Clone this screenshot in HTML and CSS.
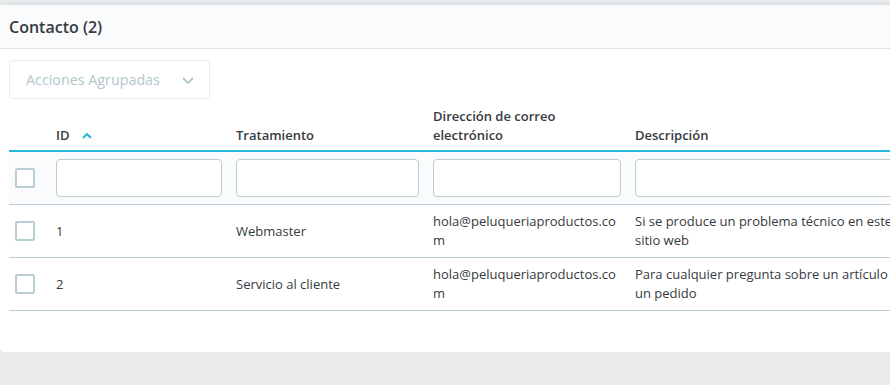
FILE: index.html
```html
<!DOCTYPE html>
<html lang="es">
<head>
<meta charset="utf-8">
<title>Contacto</title>
<link rel="stylesheet" href="styles.css">
</head>
<body>
<div class="page">
  <div class="card">
    <div class="card-header">Contacto (2)</div>
    <div class="card-body">
      <button class="bulk" disabled>Acciones Agrupadas
        <svg class="chev" width="12" height="7" viewBox="0 0 12 7"><path d="M1 1l5 5 5-5" fill="none" stroke="currentColor" stroke-width="1.8"/></svg>
      </button>
      <table class="grid">
        <colgroup>
          <col class="c-check"><col class="c-id"><col class="c-trat"><col class="c-mail"><col class="c-desc">
        </colgroup>
        <thead>
          <tr class="head">
            <th></th>
            <th>ID <svg class="sort" width="10" height="6" viewBox="0 0 10 6"><path d="M1 5l4-4 4 4" fill="none" stroke="currentColor" stroke-width="2"/></svg></th>
            <th>Tratamiento</th>
            <th>Dirección de correo electrónico</th>
            <th>Descripción</th>
          </tr>
          <tr class="filters">
            <td><span class="cb"></span></td>
            <td><span class="inp"></span></td>
            <td><span class="inp"></span></td>
            <td><span class="inp"></span></td>
            <td><span class="inp"></span></td>
          </tr>
        </thead>
        <tbody>
          <tr>
            <td><span class="cb"></span></td>
            <td>1</td>
            <td>Webmaster</td>
            <td class="mail">hola@peluqueriaproductos.com</td>
            <td>Si se produce un problema técnico en este sitio web</td>
          </tr>
          <tr>
            <td><span class="cb"></span></td>
            <td>2</td>
            <td>Servicio al cliente</td>
            <td class="mail">hola@peluqueriaproductos.com</td>
            <td>Para cualquier pregunta sobre un artículo o un pedido</td>
          </tr>
        </tbody>
      </table>
    </div>
  </div>
</div>
</body>
</html>
```
FILE: styles.css
```css
html, body {
  margin: 0;
  padding: 0;
  background: #eaebed;
  font-family: "Open Sans", "Liberation Sans", sans-serif;
  color: #363a41;
  overflow: hidden;
}
.page {
  width: 1000px;
  padding-top: 4px;
}
.card {
  background: #fff;
  border-top: 1px solid #dbe6e9;
  border-radius: 4px 0 0 4px;
  box-shadow: 0 0 4px rgba(0,0,0,.08);
}
.card-header {
  height: 44px;
  box-sizing: border-box;
  padding: 1px 9px 0;
  display: flex;
  align-items: center;
  background: #fafbfc;
  border-bottom: 1px solid #dbe6e9;
  font-size: 16px;
  font-weight: 600;
  line-height: 1;
}
.card-body {
  padding: 10px 9px 41px;
}
.bulk {
  display: flex;
  align-items: center;
  justify-content: space-between;
  width: 201px;
  height: 39px;
  box-sizing: border-box;
  padding: 0 15px 0 16px;
  background: #fff;
  border: 1px solid #e7ecee;
  border-radius: 4px;
  font-family: inherit;
  font-size: 14.3px;
  color: #b3c7cd;
  margin: 1px 0 8px;
}
.chev { color: #b3c7cd; margin-top: 1px; }
.grid {
  border-collapse: collapse;
  table-layout: fixed;
  width: 909px;
}
.c-check { width: 40px; }
.c-id { width: 180px; }
.c-trat { width: 197px; }
.c-mail { width: 202px; }
.c-desc { width: 290px; }
.head th {
  text-align: left;
  vertical-align: bottom;
  font-size: 13px;
  font-weight: 600;
  line-height: 19px;
  padding: 0 7px 5px;
  border-bottom: 2px solid #25b9d7;
}
.sort { color: #25b9d7; margin-left: 9px; vertical-align: 1px; }
.filters td {
  background: #fafbfc;
  padding: 7px 7px;
  border-bottom: 1px solid #bbcdd2;
  height: 38px;
}
.inp {
  display: block;
  height: 38px;
  box-sizing: border-box;
  border: 1px solid #bbcdd2;
  border-radius: 4px;
  background: #fff;
}
.cb {
  display: block;
  width: 20px;
  height: 20px;
  box-sizing: border-box;
  border: 2px solid #b7ced3;
  border-radius: 2px;
  background: #fff;
  margin-left: -1px;
}
tbody td {
  font-size: 13px;
  line-height: 19px;
  padding: 7px 7px;
  height: 38px;
  border-bottom: 1px solid #bbcdd2;
  vertical-align: middle;
  word-break: break-all;
}
tbody td:last-child { word-break: normal; }
```
